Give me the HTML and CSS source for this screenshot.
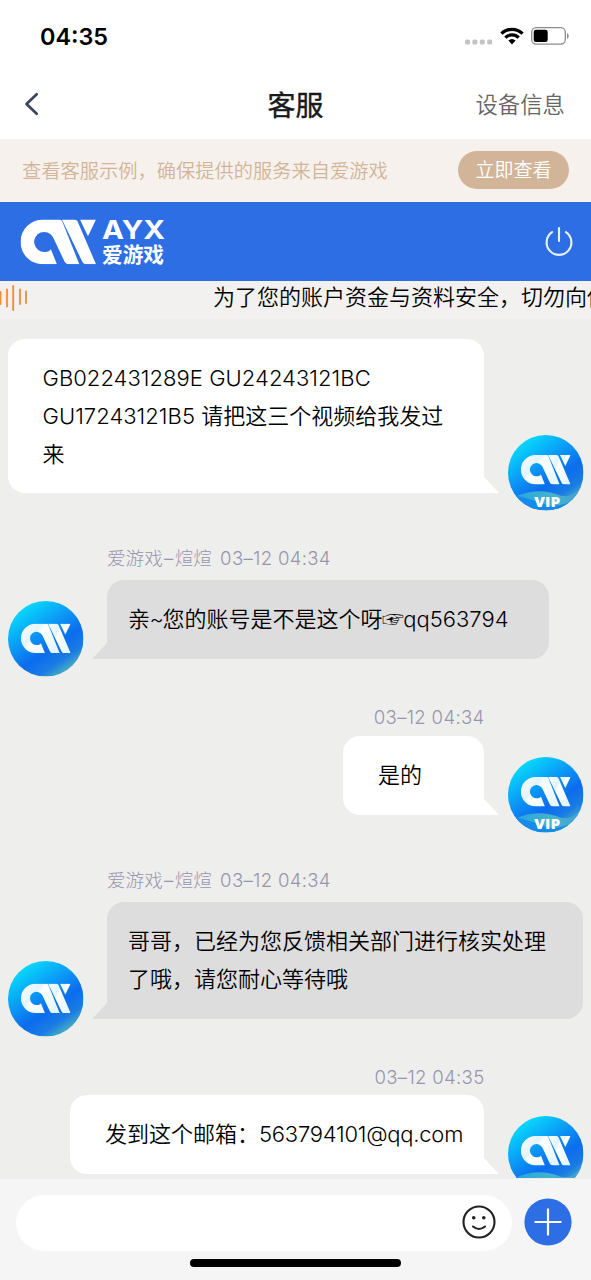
FILE: index.html
```
<!DOCTYPE html>
<html lang="zh-CN">
<head>
<meta charset="utf-8">
<title>客服</title>
<link rel="stylesheet" href="styles.css">
</head>
<body>
<svg class="defs" width="0" height="0" aria-hidden="true">
  <defs>
    <linearGradient id="sky" x1="0.15" y1="0.05" x2="0.8" y2="1">
      <stop offset="0" stop-color="#06e4fb"/>
      <stop offset="0.32" stop-color="#0aa4f8"/>
      <stop offset="0.62" stop-color="#0c6cee"/>
      <stop offset="0.8" stop-color="#1a7ce4"/>
      <stop offset="1" stop-color="#5cc4b4"/>
    </linearGradient>
    <linearGradient id="wave" x1="0" y1="0" x2="1" y2="0">
      <stop offset="0" stop-color="#25a4e2"/>
      <stop offset="0.55" stop-color="#45b4cc"/>
      <stop offset="1" stop-color="#3f9fd4"/>
    </linearGradient>
    <linearGradient id="shade" x1="0" y1="0" x2="1" y2="0.6">
      <stop offset="0" stop-color="#fff"/>
      <stop offset="0.4" stop-color="#e2f3fd"/>
      <stop offset="0.5" stop-color="#fff"/>
      <stop offset="1" stop-color="#e6f8ff"/>
    </linearGradient>
    <clipPath id="disc"><circle cx="38" cy="38" r="38"/></clipPath>
    <symbol id="mark" viewBox="0 0 226 134">
      <path d="M67 0H116C121 0 124 3 126 8L176 134H148C139 134 134 131 131 124L97 52A30 30 0 1 0 73 97C83 97 88 94 91 89L109 134H67A67 67 0 0 1 67 0Z"/>
      <path d="M124 0H160C166 0 170 3 172 8L226 134H200C191 134 187 131 184 124Z"/>
      <path d="M178 0H226L202 50Z"/>
    </symbol>
    <symbol id="avatar" viewBox="0 0 76 76">
      <circle cx="38" cy="38" r="38" fill="url(#sky)"/>
      <use href="#mark" x="13" y="22.7" width="50" height="29.8" fill="url(#shade)"/>
    </symbol>
    <symbol id="avatar-vip" viewBox="0 0 76 76">
      <circle cx="38" cy="38" r="38" fill="url(#sky)"/>
      <g clip-path="url(#disc)">
        <path d="M6 63C20 55 38 55 50 60C60 64 68 60 76 49V76H8Z" fill="url(#wave)"/>
        <path d="M0 61C16 61 24 66 38 70C48 73 58 70 70 64L60 76H8Z" fill="#168bea"/>
      </g>
      <use href="#mark" x="13" y="20" width="50" height="29.8" fill="url(#shade)"/>
      <text class="vip" x="39.5" y="72" text-anchor="middle" textLength="26" lengthAdjust="spacingAndGlyphs">VIP</text>
    </symbol>
  </defs>
</svg>
<div class="screen">
  <div class="status">
    <span class="clock">04:35</span>
    <div class="indicators">
      <svg width="28" height="6"><g fill="#c4c4c6"><rect x="0" y="0.5" width="5" height="5" rx="1.6"/><rect x="7.4" y="0.5" width="5" height="5" rx="1.6"/><rect x="14.8" y="0.5" width="5" height="5" rx="1.6"/><rect x="22.2" y="0.5" width="5" height="5" rx="1.6"/></g></svg>
      <svg class="wifi" width="24" height="18" viewBox="0 0 24 18" fill="none" stroke="#000" stroke-width="3.2"><path d="M1.4 6.6A15.2 15.2 0 0 1 22.6 6.6"/><path d="M5.3 10.6A9.6 9.6 0 0 1 18.7 10.6"/><path d="M8.4 13.6Q12 10.3 15.6 13.6L12 17.6Z" fill="#000" stroke="none"/></svg>
      <svg class="battery" width="38" height="18" viewBox="0 0 38 18"><rect x="0.7" y="0.7" width="33.6" height="16.4" rx="4.5" fill="none" stroke="#8c8c8c" stroke-width="1.3"/><rect x="2.7" y="2.7" width="14" height="12.3" rx="2.2"/><path d="M36 6Q37.8 6.8 37.8 9T36 12Z" fill="#8c8c8c"/></svg>
    </div>
  </div>
  <div class="nav">
    <svg class="back" width="16" height="24" viewBox="0 0 16 24" fill="none" stroke="#40445a" stroke-width="2.7" stroke-linecap="round" stroke-linejoin="round"><path d="M12.7 2.2L2.5 12L12.7 21.8"/></svg>
    <h1 class="title">客服</h1>
    <span class="device">设备信息</span>
  </div>
  <div class="tip">
    <span class="hint">查看客服示例，确保提供的服务来自爱游戏</span>
    <span class="pill">立即查看</span>
  </div>
  <div class="brand">
    <svg class="logo" width="150" height="48" viewBox="0 0 150 48" fill="#fff">
      <use href="#mark" x="0.5" y="1.5" width="75.5" height="44.8"/>
      <text class="ayx" x="82" y="20.5" textLength="63" lengthAdjust="spacingAndGlyphs">AYX</text>
      <text class="ayx-cn" x="82" y="44" textLength="62" lengthAdjust="spacingAndGlyphs">爱游戏</text>
    </svg>
    <svg width="30" height="32" viewBox="0 0 30 32" fill="none" stroke="#e9f4ff" stroke-width="2.1" stroke-linecap="round"><path d="M8.1 6.2A12.4 12.4 0 1 0 21.9 6.2M15 2V15"/></svg>
  </div>
  <div class="marquee">
    <svg class="sound" width="28" height="28" viewBox="0 0 28 28" stroke="#f08a34" stroke-width="1.8" stroke-linecap="round"><path d="M0.5 8V20M7 5.5V22.5M13.2 2V26M20 5.5V20M26 7.5V19"/></svg>
    <span class="scroll">为了您的账户资金与资料安全，切勿向他</span>
  </div>
  <div class="chat">
    <div class="msg mine">
      <div class="bubble wide"><span class="code">GB022431289E GU24243121BC</span><br><span class="code">GU17243121B5 </span>请把这三个视频给我发过来</div>
      <svg class="avatar"><use href="#avatar-vip"/></svg>
    </div>
    <div class="meta m2">爱游戏<span class="dash">–</span>煊煊 <span class="time">03–12 04:34</span></div>
    <div class="msg theirs">
      <svg class="avatar"><use href="#avatar"/></svg>
      <div class="bubble b2">亲<span class="tilde">~</span>您的账号是不是这个呀<span class="hand">☞</span>qq563794</div>
    </div>
    <div class="meta right m3"><span class="time">03–12 04:34</span></div>
    <div class="msg mine">
      <div class="bubble b3">是的</div>
      <svg class="avatar"><use href="#avatar-vip"/></svg>
    </div>
    <div class="meta m4">爱游戏<span class="dash">–</span>煊煊 <span class="time">03–12 04:34</span></div>
    <div class="msg theirs">
      <svg class="avatar"><use href="#avatar"/></svg>
      <div class="bubble b4">哥哥，已经为您反馈相关部门进行核实处理了哦，请您耐心等待哦</div>
    </div>
    <div class="meta right m5"><span class="time">03–12 04:35</span></div>
    <div class="msg mine">
      <div class="bubble b5">发到这个邮箱：<span class="mail">563794101@qq.com</span></div>
      <svg class="avatar"><use href="#avatar-vip"/></svg>
    </div>
  </div>
  <div class="composer">
    <div class="entry">
      <div class="field"><svg width="34" height="34" viewBox="0 0 34 34" fill="none" stroke="#222" stroke-width="2.1" stroke-linecap="round"><circle cx="17" cy="17" r="15.5"/><path d="M11 21.5Q17 26.5 23 21.5"/><g fill="#222" stroke="none"><circle cx="11.7" cy="12.8" r="1.8"/><circle cx="21.8" cy="12.8" r="1.8"/></g></svg></div>
      <svg class="plus" width="48" height="48" viewBox="0 0 48 48"><circle cx="24" cy="24" r="23.6" fill="#2d6ee5"/><path d="M10.5 24H37.5M24 10.5V37.5" stroke="#fff" stroke-width="2.2"/></svg>
    </div>
    <div class="home"></div>
  </div>
</div>
</body>
</html>
```
FILE: styles.css
```
* { box-sizing: border-box; }
body { margin: 0; font-family: Inter, "Noto Sans CJK SC", sans-serif; color: #111; }
svg { display: block; flex: none; }
.defs { position: absolute; }
.screen { width: 591px; height: 1280px; overflow: hidden; display: flex; flex-direction: column; background: #fff; }
.status { height: 72px; padding: 0 22px 0 40px; display: flex; justify-content: space-between; align-items: center; }
.clock { font-size: 23.4px; font-weight: 600; color: #000; }
.indicators { display: flex; align-items: flex-end; }
.wifi { margin-left: 7px; }
.battery { margin-left: 7.5px; }
.nav { height: 67px; padding: 0 26px 3px 24px; display: grid; grid-template-columns: 1fr auto 1fr; align-items: center; }
.title { margin: 3px 0 0 2px; font-size: 28px; line-height: 34px; font-weight: 400; -webkit-text-stroke: 0.4px #1a1a1a; color: #1a1a1a; }
.device { justify-self: end; margin-bottom: 2px; font-size: 22.4px; font-weight: 350; color: #666; white-space: nowrap; }
.tip { height: 63px; padding: 0 22px; display: flex; justify-content: space-between; align-items: center; background: #f6f1ec; color: #d2b598; font-size: 19.25px; font-weight: 350; white-space: nowrap; }
.hint { margin-bottom: 2px; }
.pill { width: 111px; height: 38px; margin-bottom: 1px; padding-top: 1px; border-radius: 19px; background: #d2b598; color: #fff; font-size: 19px; line-height: 38px; font-weight: 350; text-align: center; }
.brand { height: 79px; padding: 0 17px 0 20px; display: flex; justify-content: space-between; align-items: center; background: #2d6ee5; }
.logo { overflow: visible; }
.ayx { font-family: Inter, sans-serif; font-size: 26px; font-weight: 700; }
.ayx-cn { font-family: "Noto Sans CJK SC", sans-serif; font-size: 21px; font-weight: 700; }
.vip { font-family: "Open Sans", sans-serif; font-size: 14px; font-weight: 800; fill: #fff; }
.marquee { height: 38px; display: flex; align-items: center; overflow: hidden; padding-bottom: 4px; background: #f3f1ef; font-size: 22px; white-space: nowrap; font-weight: 350; color: #000; }
.scroll { margin: 0 0 2px 185px; line-height: 28px; }
.chat { height: 860px; padding: 20px 7.5px 0 8px; border-bottom: 1px solid #eeeeec; overflow: hidden; background: #eeeeec; }
.msg { display: flex; gap: 24px; align-items: flex-end; }
.mine { justify-content: flex-end; }
.avatar { width: 75.5px; height: 75.5px; margin-bottom: -17.5px; }
.bubble { position: relative; flex: none; border-radius: 17px; padding: 20px 20px 20px 35px; background: #fff; font-size: 22px; line-height: 38px; font-weight: 350; color: #000; }
.mine .bubble { border-bottom-right-radius: 0; }
.theirs { gap: 23.5px; }
.theirs .bubble { border-bottom-left-radius: 0; padding-left: 21px; background: #ddd; }
.bubble::after { content: ""; position: absolute; bottom: 0; width: 15px; height: 16px; background: inherit; }
.mine .bubble::after { left: 100%; clip-path: polygon(0 0, 100% 100%, 0 100%); }
.theirs .bubble::after { right: 100%; clip-path: polygon(100% 0, 100% 100%, 0 100%); }
.code, .tilde, .mail, .time { font-weight: 300; }
.wide { width: 476px; padding-left: 34.5px; }
.b2 { width: 442px; height: 79px; white-space: nowrap; }
.b3 { width: 141px; height: 79px; }
.b4 { width: 476px; height: 117px; }
.b5 { width: 414px; height: 79px; white-space: nowrap; }
.code { letter-spacing: 0.04px; }
.tilde { letter-spacing: -1.5px; margin-left: -0.5px; }
.mail { letter-spacing: -0.24px; }
.meta { height: 26px; line-height: 26px; padding-left: 99px; font-size: 18.6px; font-weight: 300; color: #9795ac; white-space: nowrap; }
.dash { margin: 0 1.3px; }
.time { margin-left: 3px; letter-spacing: 0.3px; }
.right { padding: 0 99px 0 0; text-align: right; }
.m2 { margin: 52px 0 9px; }
.m3 { margin: 45px 0 6px; }
.m4 { margin: 52px 0 9px; }
.m5 { margin: 45px 0 5px; }
.hand { font-family: "DejaVu Sans", sans-serif; font-size: 22px; letter-spacing: -1.2px; }
.composer { height: 101px; padding-top: 16px; background: #f5f5f5; display: flex; flex-direction: column; align-items: center; gap: 8px; }
.entry { width: 100%; padding: 0 19px 0 16px; display: flex; justify-content: space-between; align-items: center; }
.field { width: 496px; height: 56px; border-radius: 28px; padding: 0 16px 2px 0; display: flex; justify-content: flex-end; align-items: center; background: #fff; }
.plus { margin-bottom: 2px; }
.home { width: 211px; height: 8px; border-radius: 4px; background: #000; }
```
